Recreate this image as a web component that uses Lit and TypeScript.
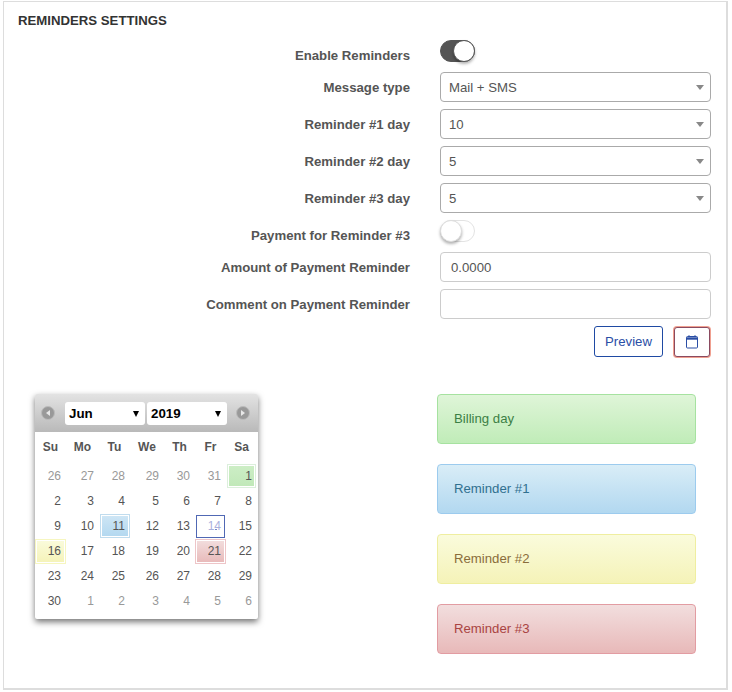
import { LitElement, html, css } from 'lit';
import { customElement } from 'lit/decorators.js';
import { classMap } from 'lit/directives/class-map.js';

const WEEKDAYS = ['Su', 'Mo', 'Tu', 'We', 'Th', 'Fr', 'Sa'];

// [day, other month]
const DAYS: [number, boolean][] = [
  [26, true], [27, true], [28, true], [29, true], [30, true], [31, true],
  ...Array.from({ length: 30 }, (_, i) => [i + 1, false] as [number, boolean]),
  [1, true], [2, true], [3, true], [4, true], [5, true], [6, true],
];

const MARKS: Record<number, string> = { 1: 'green', 11: 'blue', 14: 'today', 16: 'yellow', 21: 'red' };

@customElement('app-root')
export class AppRoot extends LitElement {
  static styles = css`
    :host {
      display: block;
      font-family: "Liberation Sans", Arial, sans-serif;
      font-size: 13.2px;
      color: #555;
    }
    .panel {
      box-sizing: border-box;
      width: 725px;
      height: 689px;
      margin: 1px 0 0 3px;
      border: 1px solid #ddd;
      border-right-width: 2px;
      border-bottom-width: 2px;
      padding: 11px 15px 0 14px;
      background: #fff;
    }
    h3 {
      margin: 0 0 11px;
      height: 16px;
      line-height: 16px;
      font-size: 13.2px;
      font-weight: bold;
      color: #333;
      text-transform: uppercase;
    }
    .row {
      display: grid;
      grid-template-columns: 392px 271px;
      column-gap: 30px;
      align-items: center;
      margin-bottom: 7px;
    }
    .row label {
      font-weight: bold;
      text-align: right;
    }
    .row.switch-row {
      margin-bottom: 10px;
      height: 22px;
    }
    .switch-row label { position: relative; top: 4px; }
    .switch {
      box-sizing: border-box;
      width: 35px;
      height: 22px;
      border-radius: 11px;
      border: 1px solid #e3e3e3;
      background: #fff;
      display: flex;
    }
    .switch.on {
      background: #555;
      border-color: #555;
      justify-content: flex-end;
    }
    .knob {
      box-sizing: border-box;
      width: 22px;
      height: 22px;
      margin: -1px;
      border-radius: 50%;
      background: #fff;
      border: 1px solid #ddd;
      box-shadow: 0 2px 3px rgba(0, 0, 0, 0.3);
    }
    .on .knob { border-color: #555; }
    .field {
      box-sizing: border-box;
      height: 30px;
      border: 1px solid #aaa;
      border-radius: 4px;
      padding: 0 6px 0 8px;
      display: flex;
      align-items: center;
      justify-content: space-between;
      color: #555;
      background: #fff;
    }
    .field.input {
      border-color: #ccc;
      padding-left: 10px;
    }
    .caret {
      width: 0;
      height: 0;
      border-left: 4px solid transparent;
      border-right: 4px solid transparent;
      border-top: 5px solid #888;
    }
    .actions {
      display: flex;
      justify-content: flex-end;
      align-items: flex-start;
      gap: 10px;
      height: 32px;
    }
    .btn {
      box-sizing: border-box;
      height: 31px;
      border: 1px solid #1f4aa3;
      border-radius: 3px;
      background: #fff;
      color: #2a4ea5;
      display: flex;
      align-items: center;
      justify-content: center;
    }
    .btn.preview { width: 69px; }
    .btn.calendar {
      width: 36px;
      height: 30px;
      margin: 1px 1px 0 1px;
      box-shadow: 0 0 0 1px #f0a090;
      border-color: #8a4a60;
    }
    .lower {
      display: grid;
      grid-template-columns: 223px 259px;
      column-gap: 179px;
      margin: 36px 0 0 17px;
      align-items: start;
    }
    .cal {
      width: 223px;
      height: 225px;
      background: #fff;
      border-radius: 2px;
      box-shadow: 0 3px 6px rgba(0, 0, 0, 0.55);
    }
    .cal-head {
      height: 38px;
      box-sizing: border-box;
      padding: 8px 6px 0;
      display: flex;
      align-items: flex-start;
      background: linear-gradient(#e3e3e3, #b9b9b9);
      border-radius: 2px 2px 0 0;
    }
    .nav {
      width: 14px;
      height: 14px;
      margin-top: 4px;
      border-radius: 50%;
      background: #999;
      border: 1px solid #bbb;
      box-sizing: border-box;
      display: flex;
      align-items: center;
      justify-content: center;
      flex: none;
    }
    .nav i {
      width: 0;
      height: 0;
      border-top: 3px solid transparent;
      border-bottom: 3px solid transparent;
    }
    .nav.prev i { border-right: 4px solid #e8e8e8; }
    .nav.next i { border-left: 4px solid #e8e8e8; }
    .pick {
      box-sizing: border-box;
      width: 80px;
      height: 23px;
      background: #fff;
      border-radius: 3px;
      display: flex;
      align-items: center;
      justify-content: space-between;
      padding: 0 6px 0 4px;
      font-size: 13.33px;
      font-weight: bold;
      color: #000;
      flex: none;
    }
    .pick.month { margin: 0 2px 0 10px; }
    .pick.year { margin-right: 9px; }
    .pick i {
      width: 0;
      height: 0;
      border-left: 3px solid transparent;
      border-right: 3px solid transparent;
      border-top: 6px solid #000;
    }
    .grid {
      display: grid;
      grid-template-columns: 31px 33px 31px 34px 31px 31px 31px;
      grid-template-rows: 32px;
      grid-auto-rows: 25px;
    }
    .wd {
      line-height: 31px;
      text-align: center;
      font-size: 12px;
      font-weight: bold;
      color: #555;
    }
    .day {
      box-sizing: border-box;
      line-height: 24px;
      font-size: 12px;
      text-align: right;
      padding-right: 5px;
      color: #555;
    }
    .day.other { color: #999; }
    .day.green, .day.blue, .day.yellow, .day.red {
      padding-right: 4px;
      border: 1px solid;
      background-clip: padding-box;
      box-shadow: inset 0 0 0 1px #fff;
      line-height: 22px;
    }
    .day.green {
      margin: 0 1px 1px;
      padding-right: 3px;
      border-color: #dcefdc;
      background-image: linear-gradient(#cdeec6, #c0e8b8);
    }
    .day.blue {
      margin: 0 0 1px 1px;
      border-color: #c0dcee;
      background-image: linear-gradient(#cfe6f5, #b2d8f0);
    }
    .day.yellow { border-color: #f6f6c0; background-image: linear-gradient(#fafbdc, #f5f3b8); }
    .day.red { border-color: #eec5c8; background-image: linear-gradient(#f2dede, #e8b9b9); }
    .day.today {
      margin: 1px;
      padding-right: 3px;
      border: 1px solid #5068b4;
      line-height: 21px;
      color: #aab0dc;
      text-decoration: underline #7884c4;
      text-underline-offset: -1px;
    }
    .legend {
      display: flex;
      flex-direction: column;
      gap: 20px;
    }
    .tag {
      box-sizing: border-box;
      height: 50px;
      border: 1px solid;
      border-radius: 4px;
      padding: 0 0 2px 16px;
      display: flex;
      align-items: center;
    }
    .tag.green { color: #3c7f45; border-color: #a6e2a0; background: linear-gradient(#dff5d8, #c0ecb8); }
    .tag.blue { color: #31708f; border-color: #9ccbee; background: linear-gradient(#d9edf7, #b2d8f0); }
    .tag.yellow { color: #8a6d3b; border-color: #efeea0; background: linear-gradient(#fafbdc, #f5f3b8); }
    .tag.red { color: #a94442; border-color: #e29ca2; background: linear-gradient(#f2dede, #e8b9b9); }
  `;

  private selectRow(label: string, value: string) {
    return html`
      <div class="row">
        <label>${label}</label>
        <div class="field"><span>${value}</span><span class="caret"></span></div>
      </div>
    `;
  }

  private inputRow(label: string, value: string) {
    return html`
      <div class="row">
        <label>${label}</label>
        <div class="field input">${value}</div>
      </div>
    `;
  }

  private switchRow(label: string, on: boolean) {
    return html`
      <div class="row switch-row">
        <label>${label}</label>
        <div class="switch ${on ? 'on' : ''}"><span class="knob"></span></div>
      </div>
    `;
  }

  private renderCalendar() {
    return html`
      <div class="cal">
        <div class="cal-head">
          <span class="nav prev"><i></i></span>
          <div class="pick month"><span>Jun</span><i></i></div>
          <div class="pick year"><span>2019</span><i></i></div>
          <span class="nav next"><i></i></span>
        </div>
        <div class="grid">
          ${WEEKDAYS.map((d) => html`<div class="wd">${d}</div>`)}
          ${DAYS.map(([d, other]) => {
            const mark = other ? '' : MARKS[d] || '';
            return html`<div class=${classMap({ day: true, other, [mark || 'plain']: true })}>${d}</div>`;
          })}
        </div>
      </div>
    `;
  }

  render() {
    return html`
      <div class="panel">
        <h3>Reminders settings</h3>
        ${this.switchRow('Enable Reminders', true)}
        ${this.selectRow('Message type', 'Mail + SMS')}
        ${this.selectRow('Reminder #1 day', '10')}
        ${this.selectRow('Reminder #2 day', '5')}
        ${this.selectRow('Reminder #3 day', '5')}
        ${this.switchRow('Payment for Reminder #3', false)}
        ${this.inputRow('Amount of Payment Reminder', '0.0000')}
        ${this.inputRow('Comment on Payment Reminder', '')}
        <div class="actions">
          <div class="btn preview">Preview</div>
          <div class="btn calendar">
            <svg width="12" height="14" viewBox="0 0 12 14" fill="none" stroke="#2a4ea5">
              <rect x="0.5" y="1.5" width="11" height="11.5" rx="1"></rect>
              <path d="M0.5 3.5h11" stroke-width="2.4"></path>
              <path d="M3 0.5v1.5M9 0.5v1.5" stroke-width="1.6"></path>
            </svg>
          </div>
        </div>
        <div class="lower">
          ${this.renderCalendar()}
          <div class="legend">
            <div class="tag green">Billing day</div>
            <div class="tag blue">Reminder #1</div>
            <div class="tag yellow">Reminder #2</div>
            <div class="tag red">Reminder #3</div>
          </div>
        </div>
      </div>
    `;
  }
}
